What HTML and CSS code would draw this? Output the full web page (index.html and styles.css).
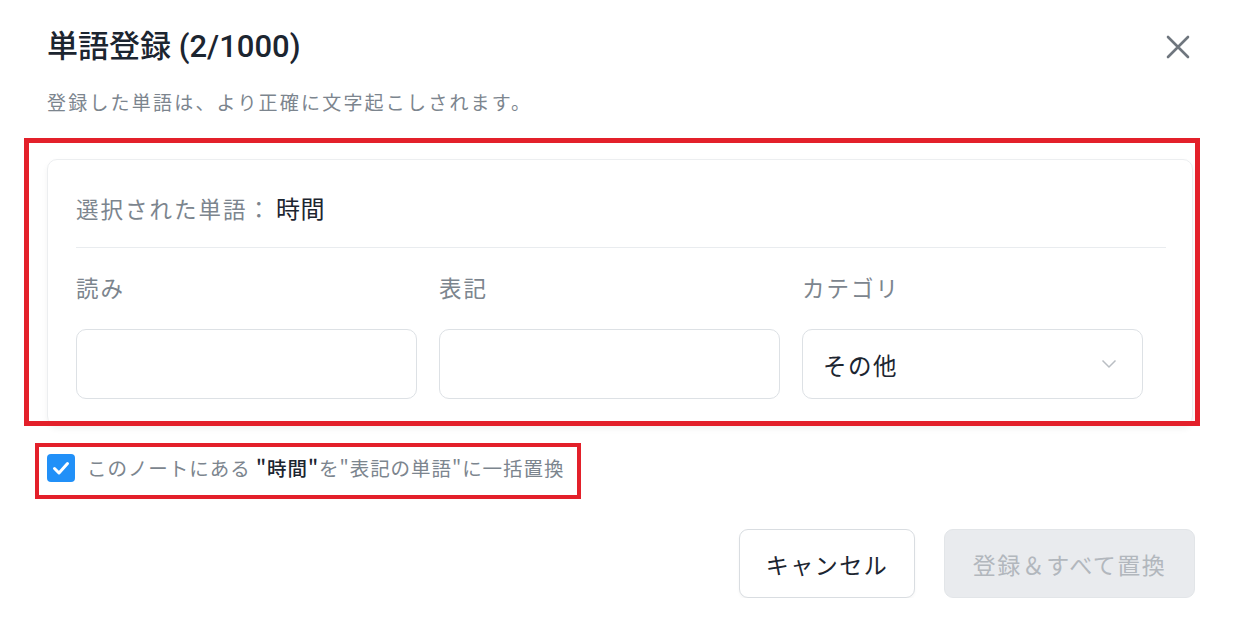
FILE: index.html
```html
<!DOCTYPE html>
<html lang="ja">
<head>
<meta charset="utf-8">
<title>単語登録</title>
<link rel="stylesheet" href="styles.css">
</head>
<body>
<div class="dialog">
  <div class="header">
    <h1 class="title">単語登録 (2/1000)</h1>
    <button class="close" aria-label="閉じる">
      <svg width="24" height="24" viewBox="0 0 24 24"><path d="M2 2 L22 22 M22 2 L2 22" stroke="#6f767e" stroke-width="2.6" stroke-linecap="round" fill="none"/></svg>
    </button>
  </div>
  <p class="subtitle">登録した単語は、より正確に文字起こしされます。</p>

  <div class="card">
    <div class="selected"><span class="selected-label">選択された単語：</span><span class="selected-word">時間</span></div>
    <div class="fields">
      <div class="field">
        <label class="label">読み</label>
        <div class="input"></div>
      </div>
      <div class="field">
        <label class="label">表記</label>
        <div class="input"></div>
      </div>
      <div class="field">
        <label class="label">カテゴリ</label>
        <div class="input select">
          <span class="select-value">その他</span>
          <svg width="16" height="10" viewBox="0 0 16 10"><path d="M1.5 1.5 L8 8 L14.5 1.5" stroke="#b9bec3" stroke-width="1.5" fill="none"/></svg>
        </div>
      </div>
    </div>
    <div class="mark mark-card"></div>
  </div>

  <div class="check-wrap">
    <div class="check-row">
      <span class="checkbox">
        <svg width="28" height="28" viewBox="0 0 28 28"><path d="M7.5 14.5 L12 19 L20.5 9.5" stroke="#fff" stroke-width="3" stroke-linecap="round" stroke-linejoin="round" fill="none"/></svg>
      </span>
      <span class="check-text">このノートにある <b class="q">"時間"</b>を"表記の単語"に一括置換</span>
      <div class="mark mark-check"></div>
    </div>
  </div>

  <div class="actions">
    <button class="btn btn-cancel">キャンセル</button>
    <button class="btn btn-primary" disabled>登録＆すべて置換</button>
  </div>
</div>
</body>
</html>
```

FILE: styles.css
```css
* { box-sizing: border-box; }
html, body {
  margin: 0;
  padding: 0;
  background: #ffffff;
}
body {
  font-family: "Noto Sans CJK JP", "Noto Sans", sans-serif;
  color: #1c2530;
}
.dialog {
  padding: 27px 46px 0 47px;
}
.header {
  display: flex;
  justify-content: space-between;
  align-items: center;
  height: 40px;
}
.title {
  margin: 0;
  font-family: "Roboto", "Noto Sans CJK JP", sans-serif;
  font-size: 31px;
  font-weight: 500;
  line-height: 40px;
  color: #1c2530;
}
.close {
  border: 0;
  background: transparent;
  padding: 0;
  margin-right: 3px;
  width: 24px;
  height: 24px;
  display: flex;
}
.subtitle {
  margin: 22px 0 0 0;
  font-size: 19px;
  line-height: 26px;
  letter-spacing: 2.2px;
  color: #7c858e;
}
.card {
  position: relative;
  margin-top: 44px;
  border: 1px solid #eceef0;
  border-radius: 10px;
  box-shadow: 0 3px 6px rgba(0, 0, 0, 0.05);
  padding: 33px 26px 26px 28px;
}
.selected {
  font-size: 22.5px;
  line-height: 30px;
  letter-spacing: 2px;
  padding-bottom: 24px;
  border-bottom: 1px solid #e9ecef;
}
.selected-label { color: #7c858e; }
.selected-word {
  color: #1c2530;
  font-size: 24px;
  letter-spacing: 0.5px;
  margin-left: 4px;
}
.fields {
  display: grid;
  grid-template-columns: 341px 341px 341px;
  column-gap: 22px;
  padding-top: 24px;
}
.field {
  display: flex;
  flex-direction: column;
}
.label {
  font-size: 22.5px;
  line-height: 30px;
  letter-spacing: 2px;
  color: #7c858e;
  margin-bottom: 27px;
}
.input {
  height: 70px;
  border: 1px solid #dde1e5;
  border-radius: 10px;
  background: #fff;
}
.select {
  display: flex;
  align-items: center;
  justify-content: space-between;
  padding: 0 25px 0 20px;
}
.select-value {
  font-size: 23.5px;
  letter-spacing: 1.5px;
  color: #1c2530;
  padding-top: 1px;
}
.mark {
  position: absolute;
  border: 5px solid #e3202a;
  pointer-events: none;
}
.mark-card {
  left: -24px;
  top: -22px;
  right: -8px;
  bottom: -1px;
}
.check-wrap {
  margin-top: 27px;
}
.check-row {
  position: relative;
  display: inline-flex;
  align-items: center;
  height: 30px;
}
.checkbox {
  width: 28px;
  height: 28px;
  border-radius: 4px;
  background: #2190f8;
  display: inline-flex;
  margin-right: 12px;
}
.check-text {
  font-size: 19.5px;
  line-height: 30px;
  letter-spacing: 0.95px;
  color: #7c858e;
}
.check-text .q {
  font-weight: 500;
  color: #1c2530;
}
.mark-check {
  border-width: 4px;
  left: -12px;
  top: -10px;
  right: -17px;
  bottom: -16px;
}
.actions {
  display: flex;
  justify-content: flex-end;
  gap: 29px;
  margin-top: 42px;
  margin-right: -2px;
}
.btn {
  height: 69px;
  border-radius: 9px;
  font-family: "Noto Sans CJK JP", sans-serif;
  font-size: 23px;
  letter-spacing: 1.5px;
  padding: 0;
}
.btn-cancel {
  width: 176px;
  background: #fff;
  border: 1px solid #d9dde1;
  color: #1c2530;
  box-shadow: 0 2px 3px rgba(0, 0, 0, 0.04);
}
.btn-primary {
  width: 251px;
  background: #e9ebee;
  border: 1px solid #e2e5e8;
  color: #b2b7bd;
}
```
